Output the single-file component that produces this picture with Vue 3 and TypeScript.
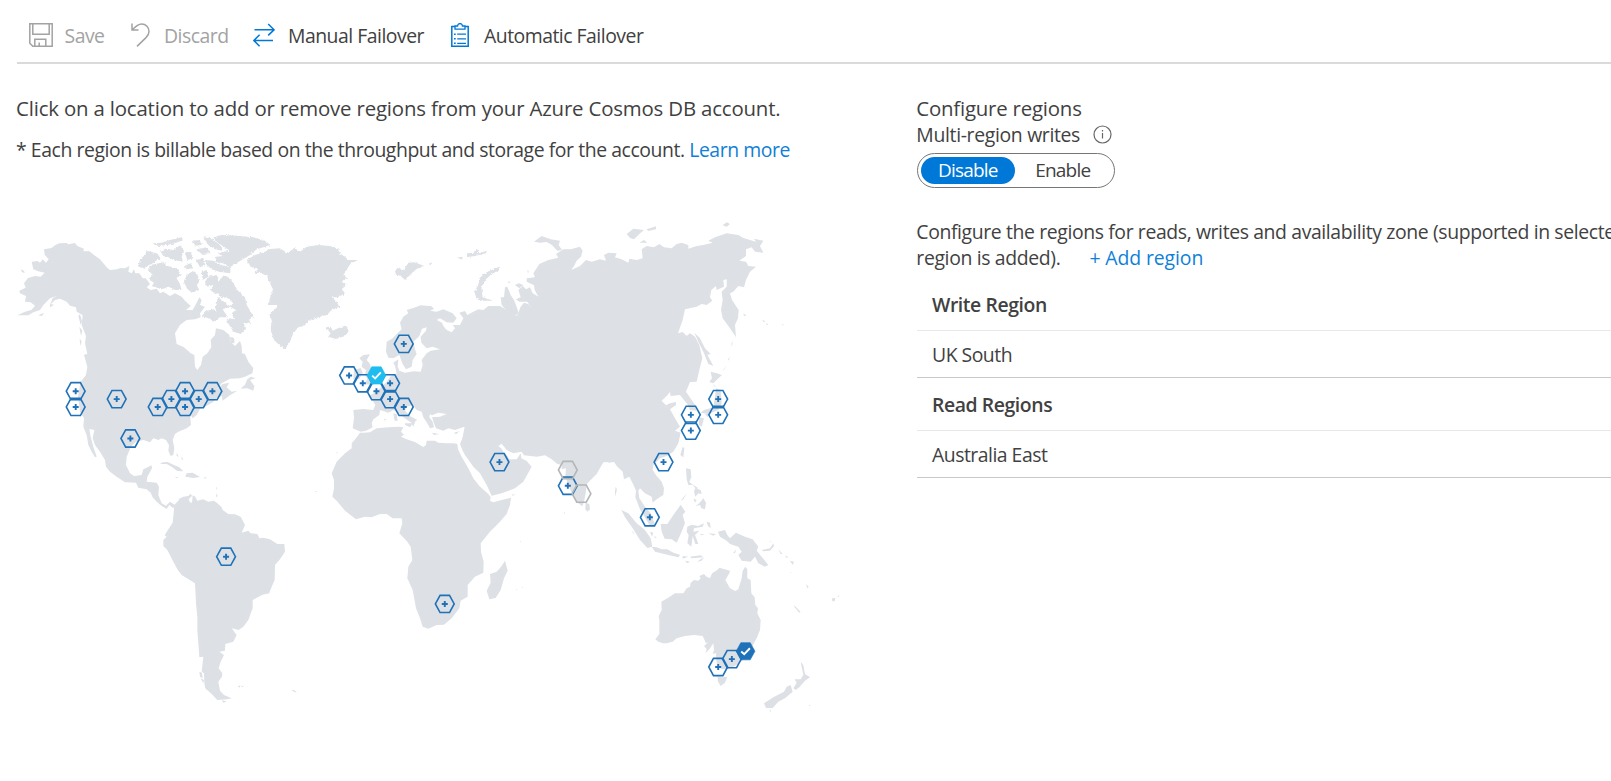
<script setup lang="ts">
import { ref } from 'vue'

type PinState = 'available' | 'disabled' | 'write' | 'read'
interface Pin {
  x: number
  y: number
  state: PinState
}

// Pins sit on a hexagonal lattice laid over the map.
const pin = (col: number, row: number, state: PinState = 'available'): Pin => ({
  x: 75.7 + col * 13.67,
  y: 391.2 + row * 7.88,
  state,
})

const pins: Pin[] = [
  pin(0, 0), pin(0, 2), pin(3, 1), pin(4, 6),
  pin(6, 2), pin(7, 1), pin(8, 0), pin(8, 2), pin(9, 1), pin(10, 0),
  pin(11, 21), pin(27, 27), pin(24, -6),
  pin(20, -2), pin(21, -1), pin(22, 0), pin(23, -1), pin(23, 1), pin(24, 2),
  pin(22, -2, 'write'),
  pin(31, 9), pin(36, 12), pin(36, 10, 'disabled'), pin(37, 13, 'disabled'),
  pin(43, 9), pin(42, 16), pin(45, 3), pin(45, 5), pin(47, 1), pin(47, 3),
  pin(47, 35), pin(48, 34), pin(49, 33, 'read'),
]

const multiRegion = ref(false)
const groups = [
  { title: 'Write Region', regions: ['UK South'] },
  { title: 'Read Regions', regions: ['Australia East'] },
]
</script>

<template>
  <div class="page">
    <header class="toolbar">
      <button class="cmd muted save">
        <svg width="24" height="24" viewBox="0 0 24 24" fill="none" stroke="#a3a3a3" stroke-width="1.5">
          <path d="M.8.8H23.2V23.2H3.8L.8 20.2ZM3.8.8V11.2H20.2V.8M5.8 23V16.2H16.8V23M10.2 23V19.5" />
        </svg>
        <span>Save</span>
      </button>
      <button class="cmd muted discard">
        <svg width="19" height="24" viewBox="0 0 19 24" fill="none" stroke="#a3a3a3" stroke-width="1.5">
          <path d="M1 .5V7H7.5M1.2 6.8C5 2.8 7.5 1 10.6 1C15 1 18 4.4 18 8.4C18 11 16.8 12.8 15 14.6L6 23.4" />
        </svg>
        <span>Discard</span>
      </button>
      <button class="cmd manual">
        <svg width="22" height="24" viewBox="0 0 22 24" fill="none" stroke="#0078d7" stroke-width="1.5">
          <path d="M1.5 6.8H20.8M15.2 1L21 6.8L15.2 12.4M20 17.5H1M6.6 11.8L.9 17.5L6.6 23.2" />
        </svg>
        <span>Manual Failover</span>
      </button>
      <button class="cmd automatic">
        <svg width="18" height="24" viewBox="0 0 18 24" fill="none" stroke="#0078d7">
          <path stroke-width="1.5" d="M4 3.6H.8V23.2H17.2V3.6H14" />
          <path stroke-width="1.3" d="M4 3V6.2H14V3H11.4C11.4-.2 6.6-.2 6.6 3Z" />
          <path stroke-width="1.3" d="M6.2 11.2H15M6.2 15.8H15M6.2 20.3H15" />
          <path stroke-width="1.6" d="M3 11.2H4.7M3 15.8H4.7M3 20.3H4.7" />
        </svg>
        <span>Automatic Failover</span>
      </button>
    </header>

    <main class="content">
      <section class="left">
        <p class="lead">Click on a location to add or remove regions from your Azure Cosmos DB account.</p>
        <p class="note">* Each region is billable based on the throughput and storage for the account. <a>Learn more</a></p>

        <svg class="map" width="840" height="500" viewBox="17 217 840 500">
          <defs>
            <filter id="coast" x="-5%" y="-5%" width="110%" height="110%" color-interpolation-filters="sRGB">
              <feTurbulence type="fractalNoise" baseFrequency="0.16" numOctaves="2" seed="4" result="n" />
              <feDisplacementMap in="SourceGraphic" in2="n" scale="9" xChannelSelector="R" yChannelSelector="G" />
            </filter>
          </defs>
          <g class="land">
            <!-- North America -->
            <g transform="translate(0 210) scale(.33333)">
              <path d="M52 316L75 305 95 299 105 287 92 277 75 275 78 258 60 250 58 242 77 233 72 220 84 204 105 198 122 200 134 188 115 184 100 178 95 155 112 153 120 158 128 148 138 158 146 148 134 134 132 118 155 114 165 106 178 100 200 99 205 103 225 99 232 108 252 116 250 124 268 124 285 137 300 148 310 160 320 172 330 180 350 178 362 174 375 175 388 168 385 185 395 190 402 178 406 190 418 190 428 205 437 205 450 222 440 232 452 240 470 236 480 250 490 245 510 258 525 250 545 260 555 272 572 288 558 300 578 300 590 278 598 262 605 270 600 285 615 290 600 310 602 322 585 328 560 330 540 345 525 370 530 402 552 412 572 430 583 435 585 470 592 480 603 465 608 440 622 430 634 412 632 390 645 375 648 355 670 360 688 375 692 395 705 408 720 393 725 408 726 430 735 432 745 455 760 475 757 490 735 500 720 505 690 506 665 520 650 540 668 522 688 518 680 532 695 545 712 542 690 556 668 572 665 558 650 565 640 575 625 585 600 597 590 615 578 625 570 612 573 645 560 655 535 665 525 672 518 690 523 715 520 735 512 738 505 722 507 705 498 690 485 685 475 690 460 685 450 697 430 690 408 695 392 710 388 722 380 740 378 765 390 790 402 798 425 795 430 778 455 766 456 775 448 790 442 800 440 815 470 818 477 830 475 855 485 880 498 887 510 875 525 885 520 895 508 885 500 897 485 888 470 875 458 862 452 848 440 838 415 833 408 818 375 817 350 800 330 785 318 770 315 750 300 725 285 705 278 685 283 660 268 657 272 680 280 710 290 740 285 742 275 725 265 705 260 675 250 650 252 625 240 605 234 560 242 515 258 495 262 470 252 435 262 432 255 400 258 378 245 345 248 315 230 305 228 292 210 287 200 275 180 266 165 270 150 285 158 265 172 257 150 265 130 285 120 300 100 307 85 316Z" />
              <path d="M62 178L72 182 74 190 66 186ZM115 316L132 308 126 318ZM150 282L162 284 150 292ZM235 318L240 312 246 335 242 345ZM238 350L247 362 243 378ZM239 385L245 395 241 408ZM255 432L268 442 275 462 268 468 262 452Z" />
              <path d="M480 762L488 757 503 756 520 764 538 772 550 784 532 783 515 770 500 762ZM560 790L578 788 600 801 580 804 556 800ZM525 800L535 802 530 805ZM612 802L622 803 614 806ZM530 728L536 740 530 738ZM545 738L550 750 545 748ZM624 810L632 815M648 830L652 835 650 840ZM650 850L653 858 648 862ZM753 500L766 505 750 510 763 528 760 542 742 535 722 536 735 524 742 508Z" />
            </g>
            <!-- Arctic archipelago -->
            <g transform="translate(0 210) scale(.33333)" filter="url(#coast)">
              <path d="M415 170L420 148 435 135 440 122 470 130 482 145 462 158 445 166 435 176ZM450 165L478 160 490 156 500 168 520 172 535 178 542 195 530 205 540 222 545 240 525 240 505 230 485 238 455 228 462 218 445 208 458 195 444 180ZM458 100L485 98 510 90 545 82 550 90 525 100 500 105 475 108ZM480 122L500 116 520 120 540 106 552 122 545 140 548 155 520 150 505 142 490 138ZM555 128L572 125 580 145 562 150ZM575 92L600 90 606 104 588 108ZM590 118L620 112 632 130 605 132ZM552 168L572 160 580 175 560 178ZM560 195L580 182 592 192 598 215 590 225 598 240 575 248 560 235 552 215ZM588 150L610 145 616 165 600 172ZM605 185L620 180 625 200 608 210ZM610 82L635 85 660 105 668 122 645 118 625 105ZM615 150L640 152 660 164 690 172 692 190 660 186 635 178 620 165ZM640 82L665 75 710 77 760 82 795 92 812 105 790 112 770 118 750 135 725 150 705 162 690 172 668 160 645 155 648 140 668 138 652 128 690 122 665 106 650 95Z" />
              <path d="M615 215L625 200 650 195 655 215 672 195 690 205 702 222 714 242 735 262 740 285 760 318 748 330 752 342 730 338 738 355 722 372 705 360 690 345 678 335 690 325 702 328 695 310 708 300 690 290 700 280 680 262 665 265 655 250 645 252 632 240 640 225 620 230ZM605 318L620 302 642 298 650 308 645 290 655 262 672 275 692 290 668 298 684 322 660 322 640 335 625 325ZM682 335L700 350 722 372 700 365ZM690 380L702 385 705 400 692 398Z" />
            </g>
            <!-- Greenland -->
            <g transform="translate(230 210) scale(.33333)" filter="url(#coast)">
              <path d="M50 150L75 135 105 125 120 117 150 115 170 128 195 115 210 125 230 110 265 105 300 108 325 117 330 130 345 140 355 150 384 150 360 162 350 180 340 195 352 205 335 215 350 225 335 238 345 250 325 262 305 262 320 275 328 290 305 300 290 315 265 322 240 330 222 348 205 352 190 370 180 395 165 418 148 405 132 390 122 360 125 330 118 315 138 295 142 285 116 285 120 262 130 240 118 215 112 198 90 188 70 190 85 178 62 170Z" />
              <path d="M287 352L302 350 308 362 330 352 348 347 356 364 345 378 318 387 295 380 302 370ZM495 183L508 173 520 182 535 158 552 157 582 167 560 177 545 190 525 210 510 196 498 194ZM595 162L607 157 602 165ZM682 142L698 140 694 149ZM712 130L732 128 740 116 748 130 770 122 768 130 735 138 708 142Z" />
              <path d="M740 266L733 245 745 225 748 205 765 190 790 176 810 170 806 182 785 192 768 208 754 232 758 262 790 272 750 272Z" />
            </g>
            <!-- Europe -->
            <g transform="translate(230 210) scale(.33333)">
              <path d="M475 443L468 425 470 395 486 386 500 372 515 358 510 338 520 320 535 310 530 300 552 293 572 286 605 289 612 297 600 302 620 305 640 298 668 310 680 325 670 338 650 337 630 325 620 330 636 338 640 348 650 360 665 367 675 355 668 345 690 345 700 325 688 308 705 303 712 315 730 305 745 298 760 300 775 288 810 288 830 300 848 318 885 315V688H697L704 650 690 655 675 660 655 655 640 662 618 655 612 640 606 622 630 620 650 612 625 608 606 616 600 612 598 622 608 635 612 652 600 655 592 640 580 622 575 605 560 600 548 585 530 590 525 602 540 618 562 630 556 634 550 650 544 638 520 622 505 608 490 600 475 608 462 604 450 600 448 615 430 628 425 640 428 652 408 662 392 665 380 660 368 655 372 625 370 600 400 597 430 600 436 585 425 568 415 558 435 548 450 535 470 515 480 500 500 490 495 468 490 458 505 448 503 470 508 482 525 488 550 484 572 485 578 465 575 450 590 430 602 422 630 418 608 410 590 415 574 398 572 380 588 362 590 352 576 356 568 378 550 395 555 418 560 432 548 450 545 470 528 478 518 462 508 435 490 445Z" />
              <path d="M388 445L400 435 420 433 410 450 420 462 425 480 440 500 445 518 425 525 402 522 412 508 405 495 408 480 395 470 398 455ZM372 480L392 474 398 490 388 506 370 508ZM525 640L548 640 540 652 525 644ZM490 610L500 612 503 632 494 632ZM498 596L504 600 500 610ZM606 668L628 672 612 675ZM672 668L688 664 678 673ZM462 628L470 626 464 632Z" />
              <path d="M815 285L812 262 822 262 825 232 832 230 842 255 852 270 860 290 866 310 850 320 832 305ZM855 225L866 220 880 225 868 235Z" />
            </g>
            <!-- Africa, Arabia and India -->
            <g transform="translate(320 400) scale(.33333)">
              <path d="M120 98L132 98 150 97 170 85 205 82 235 80 250 82 243 95 252 104 243 110 260 118 285 126 310 141 318 135 320 122 345 122 355 128 380 130 402 130 412 132 414 148 425 170 445 205 460 235 478 258 505 282 512 292 510 302 520 307 545 300 573 293 570 315 560 342 540 365 510 395 482 430 483 455 491 485 490 518 465 530 443 555 443 590 422 602 418 625 395 655 372 674 350 675 325 686 308 680 300 655 288 625 278 570 262 535 265 500 277 480 272 440 262 425 238 400 247 370 245 355 218 355 200 342 180 342 155 352 135 350 108 358 75 332 50 302 37 290 42 265 42 240 35 220 50 185 75 160 95 145 95 130 108 115Z" />
              <path d="M430 60L435 82 430 108 420 132 428 152 435 165 460 200 480 220 500 255 515 287 545 280 585 265 610 245 635 200 620 183 604 175 602 160 590 178 568 178 562 168 550 155 545 146 535 138 545 131 560 150 580 160 605 155 612 166 650 170 675 166 695 178 712 192 726 195 725 208 738 205 736 230 745 255 760 290 775 310 787 319 792 305 797 280 800 252 830 222 850 187 885 186 910 195V60ZM797 308L808 312 810 328 802 335 796 328Z" />
              <path d="M555 482L563 512 552 535 542 570 527 594 508 598 500 572 512 548 510 522 530 515 545 498ZM574 284L588 283 578 287ZM588 567L592 567 590 570ZM606 560L610 562 607 564ZM887 260L890 268 887 275ZM30 152L34 155ZM47 158L56 157 50 160ZM733 335L735 342 731 340ZM600 423L604 424 601 426Z" />
            </g>
            <!-- Asia -->
            <g transform="translate(500 210) scale(.33333)">
              <path d="M-12 315L0 290 20 302 36 320 52 316 62 290 72 278 85 282 97 298 82 275 58 275 48 268 62 262 55 240 68 228 78 238 90 232 98 250 115 260 104 240 102 226 80 215 80 205 105 202 100 190 110 175 118 162 145 150 175 143 168 132 190 118 212 118 240 110 248 122 243 140 230 152 222 168 214 180 240 168 258 150 275 155 300 148 318 152 312 135 325 128 350 130 345 142 365 148 385 158 388 146 410 150 428 145 425 118 440 108 462 112 478 102 492 112 515 115 530 102 545 98 565 105 565 116 590 108 610 105 638 98 625 92 645 82 680 70 715 75 730 84 750 90 768 95 762 86 790 92 780 108 790 128 765 125 755 112 738 118 738 138 718 152 738 155 745 168 768 170 750 185 738 210 732 232 715 228 700 245 690 250 696 270 706 285 716 300 714 325 705 345 708 382 690 355 668 325 663 300 668 270 665 245 680 230 680 208 670 210 672 230 650 240 648 228 634 240 630 262 637 272 620 285 605 282 590 290 555 298 548 330 534 370 548 366 560 378 570 370 585 380 598 405 607 445 598 480 590 515 570 516 558 545 575 570 588 588 590 602 570 600 562 582 550 568 540 555 512 558 510 546 500 558 485 572 498 586 510 580 528 576 528 585 510 598 525 625 540 650 525 662 542 668 535 700 520 725 500 738 480 745 460 765 458 780 470 798 485 815 492 835 490 855 470 868 458 878 455 860 435 850 420 835 415 842 418 865 435 890 452 910 458 925 465 945 450 948 435 922 420 898 406 862 408 842 398 820 388 800 372 808 368 785 350 768 342 755 328 758 315 752 300 740 180 742 150 738 132 732 90 735 62 722 15 698-12 685Z" />
              <path d="M102 95L125 78 152 88 180 92 176 105 186 120 172 122 155 104 140 96 120 98ZM380 72L400 56 432 60 418 72 402 88 390 84ZM440 58L468 49 468 58 445 63ZM418 98L432 90 442 98ZM668 46L680 37 690 42 680 50ZM25 214L32 217 25 220ZM82 180L86 182 84 192ZM583 368L600 385 615 415 632 432 622 434 640 468 625 462 612 430 595 395ZM632 485L650 490 666 495 652 508 640 520 628 516 636 505ZM638 522L648 530 644 530ZM648 535L662 540 665 580 655 600 625 612 602 608 612 600 640 592 645 560ZM596 622L612 625 605 650 597 645ZM616 612L628 612 622 622ZM548 710L553 715 550 742 541 735ZM730 310L740 317 732 317ZM745 316L752 318ZM787 330L797 334 790 336ZM798 340L806 343 800 345ZM846 343L852 344 848 347ZM684 448L690 440 686 452ZM694 402L698 392 696 410ZM348 830L350 842 346 860 345 845ZM668 482L680 466 672 480Z" />
            </g>
            <!-- South-East Asia and Oceania -->
            <g transform="translate(630 380) scale(.33333)">
              <path d="M-26 390L-5 400 20 430 45 450 62 475 67 500 52 504 30 480 8 445-15 412ZM65 500L80 502 95 508 112 508 130 518 150 524 146 532 115 525 75 515ZM92 432L112 432 130 405 152 374 166 395 158 405 165 430 152 462 140 488 125 478 104 476 95 455ZM172 440L185 434 205 438 222 430 218 440 192 445 190 455 208 452 195 465 205 492 196 492 188 468 184 500 172 490 176 465 170 455ZM264 455L285 450 292 465 300 475 318 458 345 470 368 478 385 500 380 512 395 530 415 555 404 560 385 550 375 530 362 545 335 542 325 525 335 515 325 500 300 492 290 482 270 470Z" />
              <path d="M168 265L182 268 184 292 178 305 188 315 175 315 170 298ZM195 325L212 330 215 342 205 340 196 350 192 335ZM208 370L220 355 228 368 225 388 214 385 210 375 196 378ZM152 362L170 340 160 358ZM190 356L200 360 195 368ZM186 312L205 325 198 326ZM230 425L240 428 242 445 234 438ZM210 462L224 462 214 466ZM235 460L258 462 250 467ZM158 528L175 530 158 536ZM180 530L212 526 220 532 185 535ZM200 545L222 532 215 542ZM165 542L180 545 172 550ZM395 510L420 505 430 490 432 498 420 512 400 514ZM415 480L428 488 422 486ZM445 508L458 522 452 522ZM465 526L475 532 470 534ZM480 542L492 545 488 555ZM528 612L536 620 532 625ZM538 630L540 640ZM492 675L512 696 508 698 494 682ZM606 655L616 654 614 664 607 664ZM622 648L629 646 625 651ZM640 579L645 580ZM650 577L654 579ZM310 518L318 508 315 520ZM536 974L542 976 538 978ZM418 992L424 990 421 996ZM482 576L485 577 483 580ZM60 455L70 458 66 470ZM5 450L12 460 10 462ZM72 468L80 472 76 475Z" />
              <path d="M346 560L352 568 352 595 362 600 364 640 374 652 376 675 384 685 382 700 392 720 390 750 380 775 366 800 352 830 320 855 295 866 275 868 260 850 258 820 248 822 252 810 250 790 238 808 226 820 230 808 222 798 236 785 228 790 218 768 192 765 165 768 140 775 128 785 110 790 98 790 85 785 76 778 88 762 88 720 86 708 95 690 94 665 112 655 135 640 160 640 170 625 180 620 182 608 192 600 205 602 212 595 208 588 222 582 230 590 240 595 246 580 262 570 268 563 300 572 298 580 286 600 300 625 316 633 325 628 335 595 338 572ZM262 888L275 892 292 890 285 908 272 918 264 905ZM512 845L520 855 525 882 540 892 525 902 508 922 497 930 490 925 500 908 494 898 512 898 520 885ZM482 915L488 935 465 955 445 965 428 984 408 984 402 970 430 952 462 935 470 920Z" />
            </g>
            <!-- South America -->
            <g transform="translate(140 470) scale(.33333)">
              <path d="M102 118L102 106 115 92 118 86 130 80 145 78 152 71 156 78 146 88 150 97 156 98 158 76 166 80 172 92 190 88 205 95 222 92 232 100 245 112 248 120 265 132 285 133 302 140 315 165 305 188 325 182 332 190 352 192 358 205 370 203 390 208 412 222 433 222 435 245 420 268 405 285 404 330 390 362 388 370 368 374 338 390 338 415 325 450 310 470 296 480 275 475 290 495 280 515 256 522 255 542 238 545 252 555 242 575 236 595 247 610 246 620 235 635 240 662 252 675 275 685 262 688 232 690 215 672 196 655 193 640 192 610 185 605 190 560 178 562 175 520 172 480 172 440 168 400 165 340 125 315 112 298 100 275 82 240 70 228 70 210 80 200 74 196 85 178 98 158Z" />
              <path d="M178 605L186 608 188 625 180 620ZM182 625L192 630 190 640ZM194 645L205 655 200 660ZM245 690L260 695 250 698ZM294 648L302 646 298 653ZM304 648L312 647 306 652ZM455 660L464 661 470 668 462 665ZM524 63L532 64 528 66Z" />
            </g>
          </g>

          <g v-for="(p, i) in pins" :key="i" :class="['pin', p.state]" :transform="`translate(${p.x} ${p.y})`">
            <path class="hex" d="M-9.4 0L-4.7-8.6H4.7L9.4 0L4.7 8.6H-4.7Z" />
            <path v-if="p.state === 'available'" class="plus" d="M-3 0H3M0-3V3" />
            <path v-if="p.state === 'write' || p.state === 'read'" class="check" d="M-4.3 .2L-1.3 3L4.4-3" />
          </g>
        </svg>
      </section>

      <section class="right">
        <h2 class="heading">Configure regions</h2>
        <div class="label-row">
          <span class="label">Multi-region writes</span>
          <svg width="19" height="19" viewBox="0 0 19 19" fill="none" stroke="#666">
            <circle cx="9.5" cy="9.5" r="8.5" stroke-width="1.2" />
            <path d="M9.5 8V13.6M9.5 5V6.5" stroke-width="1.2" />
          </svg>
        </div>
        <div class="toggle">
          <button :class="['opt', { on: !multiRegion }]" @click="multiRegion = false">Disable</button>
          <button :class="['opt', { on: multiRegion }]" @click="multiRegion = true">Enable</button>
        </div>
        <p class="desc">
          <span class="desc-first">Configure the regions for reads, writes and availability zone (supported in selecte</span><br>
          <span class="desc-second">region is added).</span><a class="add">+ Add region</a>
        </p>
        <div v-for="g in groups" :key="g.title" class="group">
          <div class="group-title">{{ g.title }}</div>
          <div v-for="r in g.regions" :key="r" class="group-row">{{ r }}</div>
        </div>
      </section>
    </main>
  </div>
</template>

<style>
body {
  background: #fff;
}
</style>

<style scoped>
.page {
  width: 100%;
  height: 781px;
  overflow: hidden;
  font-family: "Open Sans", "Noto Sans", sans-serif;
  font-size: 19.4px;
  color: #414141;
  white-space: nowrap;
}
p, h2 {
  margin: 0;
  font-weight: 400;
}
button {
  border: 0;
  padding: 0;
  background: none;
  font: inherit;
  color: inherit;
}
a {
  color: #0f7fd8;
}
.toolbar {
  box-sizing: border-box;
  height: 64px;
  margin-left: 17px;
  padding: 8px 0 0 12px;
  display: flex;
  align-items: center;
  border-bottom: 2px solid #dadada;
}
.cmd {
  display: flex;
  align-items: center;
  height: 54px;
  letter-spacing: -0.5px;
}
.cmd span {
  padding-top: 2px;
  line-height: 26px;
}
.muted {
  color: #a3a3a3;
}
.save {
  width: 102px;
  gap: 11.5px;
}
.discard {
  width: 122px;
  gap: 14px;
}
.manual {
  width: 198px;
  gap: 13px;
}
.automatic {
  gap: 15px;
}
.content {
  display: flex;
  padding: 29px 0 0 17px;
}
.left {
  flex: none;
  width: 900px;
}
.lead {
  height: 41px;
  margin-left: -1px;
  line-height: 30px;
  font-size: 20.4px;
  letter-spacing: -0.17px;
}
.note {
  height: 83px;
  margin-left: -1px;
  line-height: 32px;
  letter-spacing: -0.43px;
}
.map {
  display: block;
}
.land {
  fill: #dde0e5;
}
.hex {
  fill: none;
  stroke: #1f72b8;
  stroke-width: 1.6;
}
.disabled .hex {
  stroke: #b4b6b8;
}
.plus {
  fill: none;
  stroke: #1f72b8;
  stroke-width: 1.9;
}
.check {
  fill: none;
  stroke: #fff;
  stroke-width: 1.9;
}
.write .hex {
  fill: #1fbcf0;
  stroke: #1fbcf0;
  stroke-width: 0.6;
}
.read .hex {
  fill: #1f72b8;
  stroke-width: 0.6;
}
.right {
  flex: none;
  width: 694px;
}
.heading {
  height: 27px;
  margin-left: -0.7px;
  line-height: 30px;
  font-size: 20.4px;
  letter-spacing: -0.2px;
}
.label-row {
  display: flex;
  align-items: center;
  gap: 13px;
  height: 29px;
  margin-left: -0.7px;
  padding-bottom: 4px;
  letter-spacing: -0.33px;
}
.toggle {
  box-sizing: border-box;
  display: flex;
  align-items: center;
  width: 198px;
  height: 35px;
  padding: 0 3px;
  border: 1px solid #767676;
  border-radius: 18px;
}
.opt {
  width: 94px;
  height: 27px;
  line-height: 25px;
  border-radius: 14px;
  font-size: 19px;
  letter-spacing: -0.8px;
}
.opt.on {
  background: #0078d7;
  color: #fff;
  font-weight: 500;
}
.opt:last-child {
  width: 97px;
}
.desc {
  margin: 31px 0 0 -0.7px;
  height: 59px;
  line-height: 26px;
  letter-spacing: -0.38px;
}
.desc-second {
  letter-spacing: -0.35px;
}
.add {
  margin-left: 29px;
  letter-spacing: -0.1px;
}
.group-title {
  box-sizing: border-box;
  height: 53px;
  padding-left: 15px;
  line-height: 53px;
  font-weight: 600;
  letter-spacing: -0.42px;
  border-bottom: 1px solid #e8e8e8;
}
.group-row {
  box-sizing: border-box;
  height: 47px;
  padding-left: 15px;
  line-height: 47px;
  letter-spacing: -0.5px;
  border-bottom: 1px solid #c8c8c8;
}
</style>
